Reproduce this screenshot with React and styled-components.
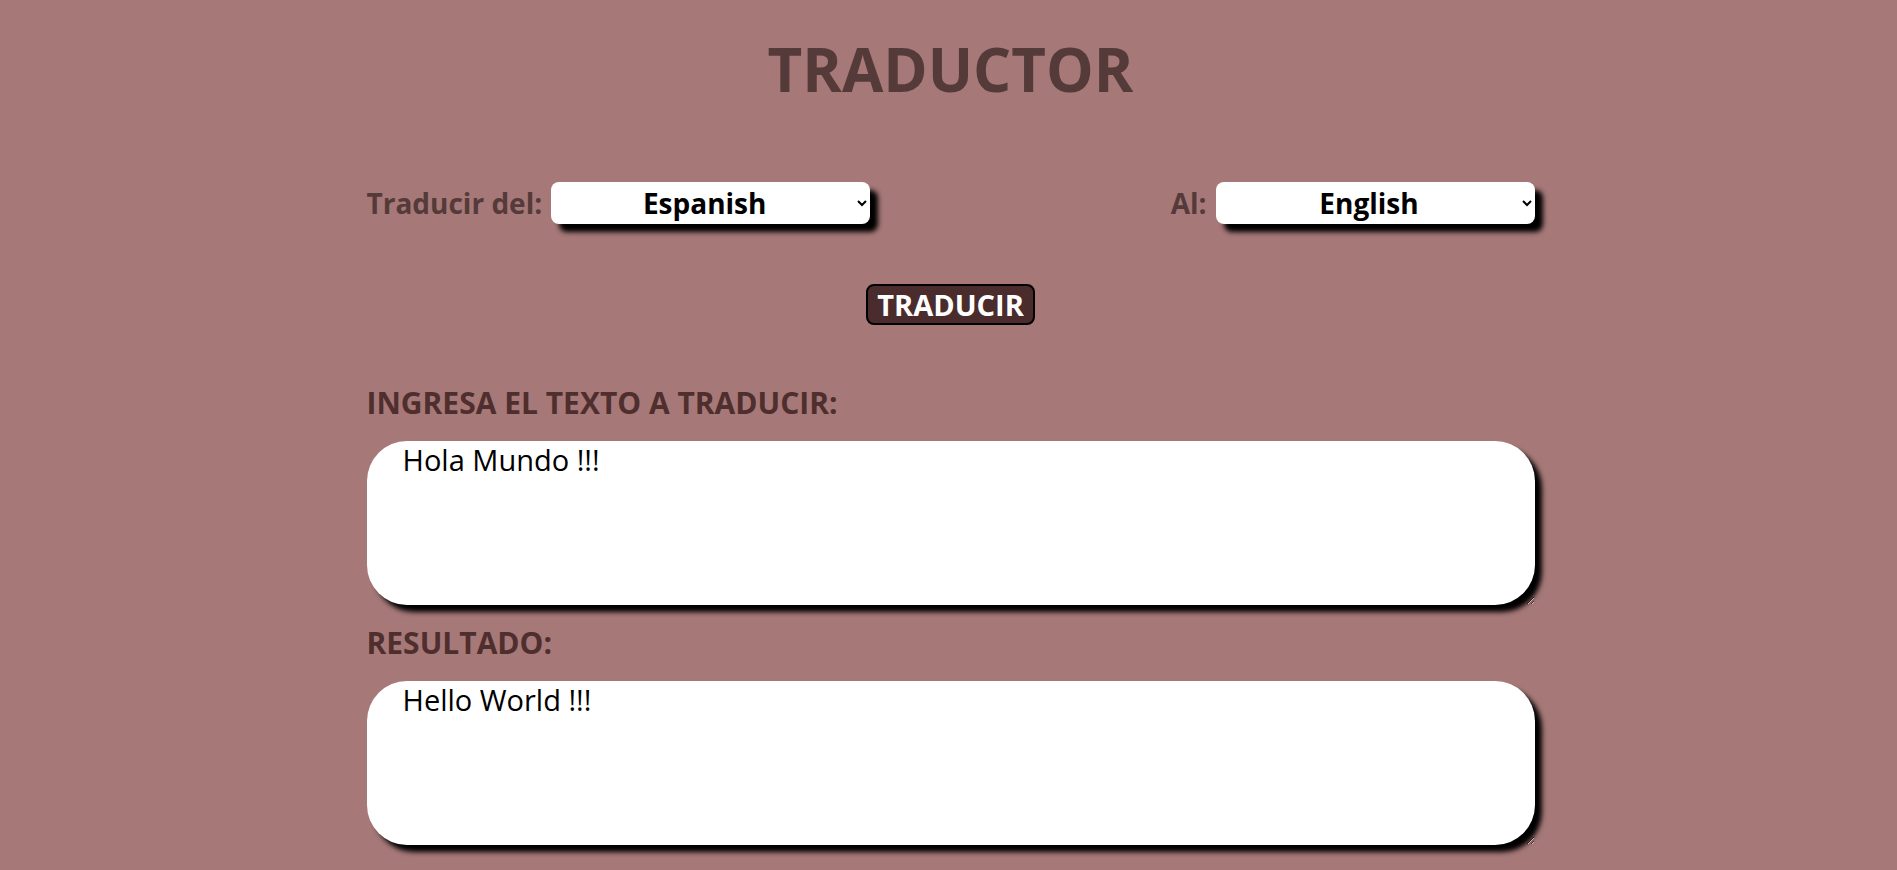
import styled, { createGlobalStyle } from "styled-components";

const GlobalStyle = createGlobalStyle`
  body {
    margin: 0;
    background-color: #a67878;
    font-family: "Open Sans", "Noto Sans", sans-serif;
  }
`;

const Container = styled.div`
  width: 1168px;
  margin-left: calc(50% - 582px);
  padding-bottom: 40px;
`;

const Title = styled.h1`
  margin: 28px 0 72px 0;
  text-align: center;
  font-size: 60px;
  font-weight: 700;
  color: #553a3a;
`;

const Row = styled.div`
  display: flex;
  justify-content: space-between;
  align-items: center;
`;

const Group = styled.div`
  display: flex;
  align-items: center;
  gap: 9px;
`;

const Label = styled.label`
  font-size: 28px;
  font-weight: 700;
  color: #553a3a;
`;

const Select = styled.select`
  width: 319px;
  height: 42px;
  border: none;
  border-radius: 8px;
  background-color: white;
  color: black;
  font-family: "Open Sans", "Noto Sans", sans-serif;
  font-size: 28px;
  font-weight: 700;
  text-align: center;
  box-shadow: 8px 8px 5px black;
`;

const ButtonRow = styled.div`
  display: flex;
  justify-content: center;
  margin: 60px 0 59px 0;
`;

const Button = styled.button`
  height: 41px;
  padding: 0 9px;
  border: 2px solid black;
  border-radius: 8px;
  background-color: #4a2c2c;
  color: white;
  font-family: "Open Sans", "Noto Sans", sans-serif;
  font-size: 29px;
  font-weight: 700;
  line-height: 1;
  cursor: pointer;
`;

const SectionTitle = styled.h2`
  margin: 0 0 19px 0;
  font-size: 30px;
  line-height: 38px;
  font-weight: 700;
  color: #4f2e2e;
`;

const TextArea = styled.textarea`
  display: block;
  box-sizing: border-box;
  width: 100%;
  height: 164px;
  margin-bottom: 19px;
  padding: 0 36px;
  border: none;
  border-radius: 40px;
  background-color: white;
  color: black;
  font-family: "Open Sans", "Noto Sans", sans-serif;
  font-size: 29px;
  line-height: 38px;
  box-shadow: 7px 7px 5px black;
  outline: none;
`;

const App = () => {
  return (
    <>
      <GlobalStyle />
      <Container>
        <Title>TRADUCTOR</Title>
        <Row>
          <Group>
            <Label>Traducir del:</Label>
            <Select defaultValue="es">
              <option value="es">Espanish</option>
              <option value="en">English</option>
            </Select>
          </Group>
          <Group>
            <Label>Al:</Label>
            <Select defaultValue="en">
              <option value="es">Espanish</option>
              <option value="en">English</option>
            </Select>
          </Group>
        </Row>
        <ButtonRow>
          <Button type="button">TRADUCIR</Button>
        </ButtonRow>
        <SectionTitle>INGRESA EL TEXTO A TRADUCIR:</SectionTitle>
        <TextArea defaultValue="Hola Mundo !!!" />
        <SectionTitle>RESULTADO:</SectionTitle>
        <TextArea defaultValue="Hello World !!!" readOnly />
      </Container>
    </>
  );
};

export default App;
